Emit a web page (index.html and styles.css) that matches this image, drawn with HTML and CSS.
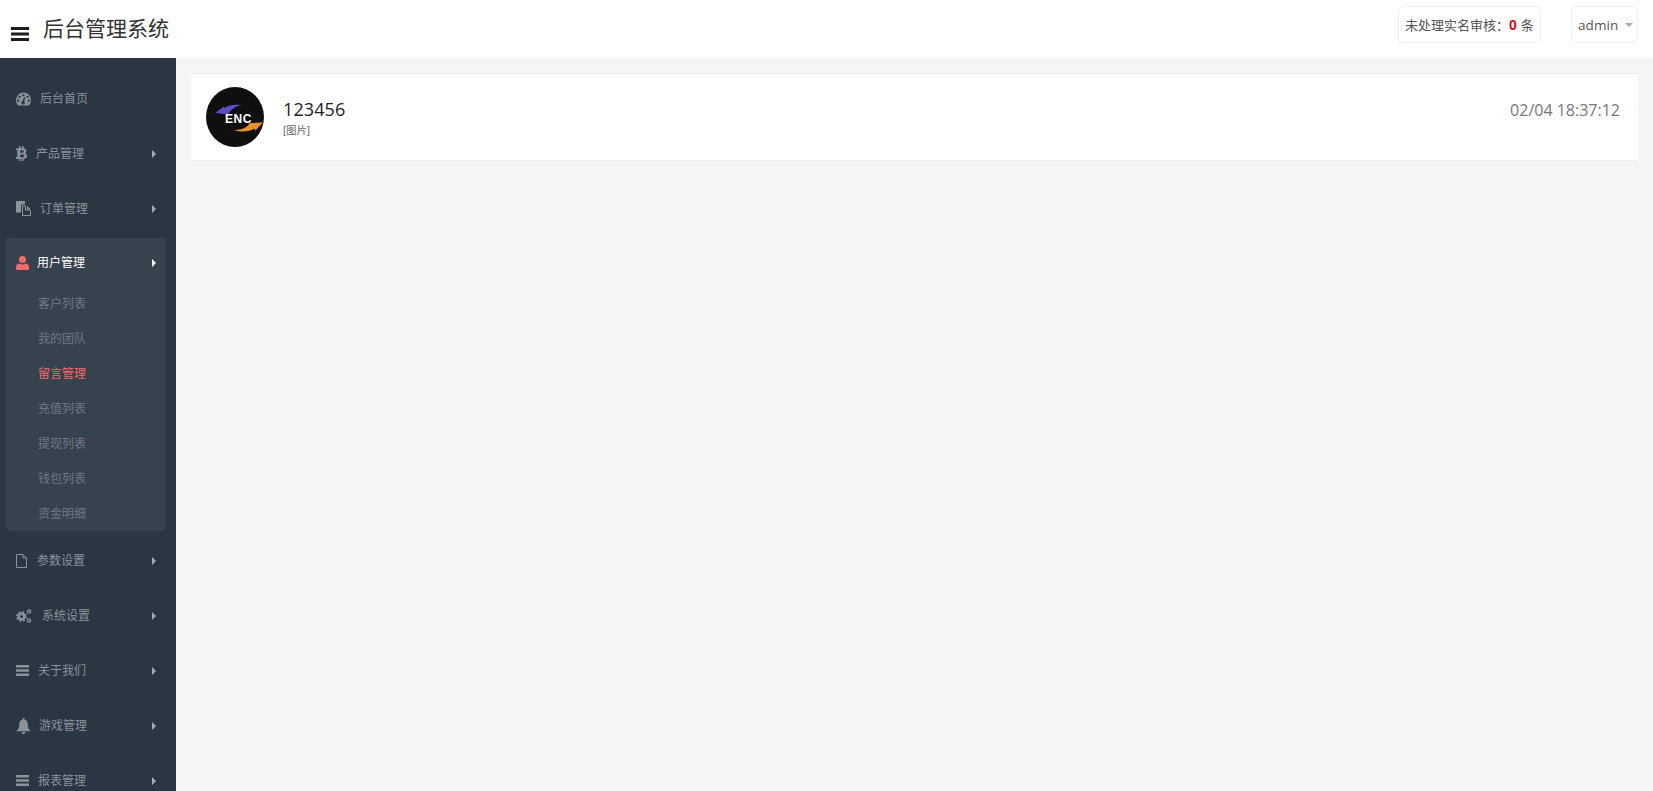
FILE: index.html
```html
<!DOCTYPE html>
<html lang="zh">
<head>
<meta charset="utf-8">
<title>后台管理系统</title>
<link rel="stylesheet" href="styles.css">
</head>
<body>
<header class="topbar">
  <div class="brand">
    <svg class="burger" viewBox="0 0 18 14"><path d="M0 0h18v3H0zM0 5.500h18v3H0zM0 11h18v3H0z"/></svg>
    <span class="brand-title">后台管理系统</span>
  </div>
  <div class="top-actions">
    <div class="pill pill-notice">未处理实名审核：<b class="count">0</b> 条</div>
    <div class="pill pill-user">admin<i class="caret"></i></div>
  </div>
</header>
<div class="layout">
  <nav class="sidebar">
    <a class="nav-item">
      <svg class="ico" viewBox="0 0 16 14"><path fill-rule="evenodd" d="M8 0a8 8 0 0 1 8 8c0 2-.6 3.800-1.700 5.300a1.500 1.500 0 0 1-1.200.7H2.900a1.500 1.500 0 0 1-1.200-.7A8.800 8.800 0 0 1 0 8a8 8 0 0 1 8-8zM8 1.700a1.200 1.200 0 1 0 0 2.400 1.200 1.200 0 0 0 0-2.400zM3.800 3.500a1.200 1.200 0 1 0 0 2.400 1.200 1.200 0 0 0 0-2.400zM12.200 3.500a1.200 1.200 0 1 0 0 2.400 1.200 1.200 0 0 0 0-2.400zM2.300 7.600a1.200 1.200 0 1 0 0 2.400 1.200 1.200 0 0 0 0-2.400zM13.700 7.600a1.200 1.200 0 1 0 0 2.400 1.200 1.200 0 0 0 0-2.400zM8.600 5 7 9.300a1.800 1.800 0 1 0 1.700.4L10 5.300z"/></svg>
      <span class="label gap-9">后台首页</span>
    </a>
    <a class="nav-item">
      <svg class="ico ico-narrow" viewBox="0 0 11 15"><path fill-rule="evenodd" d="M3 0h1.600v2.200H6V0h1.600v2.300C9.300 2.600 10.300 3.600 10.300 5.100c0 1-.5 1.800-1.400 2.100 1.300.3 2.100 1.300 2.100 2.700 0 2-1.300 2.900-3.400 3V15H6v-2.100H4.600V15H3v-2.100H0v-1.800h1.300V3.900H0V2.200h3zM4.200 4.200v2.500h2.100c.9 0 1.400-.4 1.400-1.300s-.5-1.200-1.400-1.200zM4.200 8.500v2.700h2.500c1 0 1.600-.5 1.600-1.400s-.6-1.300-1.600-1.300z"/></svg>
      <span class="label gap-9">产品管理</span><i class="arrow"></i>
    </a>
    <a class="nav-item">
      <svg class="ico ico-files" viewBox="0 0 15 15"><path fill-rule="evenodd" d="M0 0h9v3.500H6a1 1 0 0 0-1 1V11.500H0zM6 4.500h4V8.500h4L15 9.500V15H6zM7 5.500V14h7V9.500H9V5.500zM11 4.700l3.500 3.500H11z"/></svg>
      <span class="label gap-9">订单管理</span><i class="arrow"></i>
    </a>
    <div class="nav-group">
      <a class="nav-item nav-item-open">
        <svg class="ico ico-user" viewBox="0 0 13 14"><path d="M6.500 0a3.500 3.500 0 1 1 0 7 3.500 3.500 0 0 1 0-7zM3 7.500c1 .7 2.200 1 3.500 1s2.500-.3 3.500-1c2 .4 3 1.800 3 3.800v1.200c0 .9-.6 1.500-1.500 1.500h-10C.6 14 0 13.400 0 12.500v-1.200c0-2 1-3.400 3-3.800z"/></svg>
        <span class="label gap-8">用户管理</span><i class="arrow"></i>
      </a>
      <ul class="sub-list">
        <li class="sub-item">客户列表</li>
        <li class="sub-item">我的团队</li>
        <li class="sub-item sub-item-active">留言管理</li>
        <li class="sub-item">充值列表</li>
        <li class="sub-item">提现列表</li>
        <li class="sub-item">钱包列表</li>
        <li class="sub-item">资金明细</li>
      </ul>
    </div>
    <a class="nav-item">
      <svg class="ico ico-doc" viewBox="0 0 11 14"><path fill="none" stroke="currentColor" stroke-width="1" d="M.5.500h6.500l3.500 3.500v9.500H.5zM7 .500V4h3.500"/></svg>
      <span class="label gap-10">参数设置</span><i class="arrow"></i>
    </a>
    <a class="nav-item">
      <svg class="ico ico-cogs" viewBox="0 0 16 14"><g fill="none" stroke="currentColor"><circle cx="5.500" cy="7.500" r="2.800" stroke-width="2.600"/><circle cx="5.500" cy="7.500" r="4.700" stroke-width="1.500" stroke-dasharray="2 1.700"/><circle cx="13" cy="2.600" r="1.600" stroke-width="1.300"/><circle cx="13" cy="11.400" r="1.600" stroke-width="1.300"/></g></svg>
      <span class="label gap-10">系统设置</span><i class="arrow"></i>
    </a>
    <a class="nav-item">
      <svg class="ico ico-bars" viewBox="0 0 13 11"><path d="M0 0h13v2.400H0zM0 4.300h13v2.400H0zM0 8.600h13V11H0z"/></svg>
      <span class="label gap-9">关于我们</span><i class="arrow"></i>
    </a>
    <a class="nav-item">
      <svg class="ico ico-bell" viewBox="0 0 14 15"><path d="M7 0a1 1 0 0 1 1 1v.6c2 .4 3 2 3 4.400 0 3 .8 4.600 3 6.500H0c2.200-1.900 3-3.500 3-6.500 0-2.400 1-4 3-4.400V1a1 1 0 0 1 1-1zM5.200 13.200h3.600A1.900 1.900 0 0 1 7 15a1.900 1.900 0 0 1-1.800-1.800z"/></svg>
      <span class="label gap-8">游戏管理</span><i class="arrow"></i>
    </a>
    <a class="nav-item">
      <svg class="ico ico-bars" viewBox="0 0 13 11"><path d="M0 0h13v2.400H0zM0 4.300h13v2.400H0zM0 8.600h13V11H0z"/></svg>
      <span class="label gap-9">报表管理</span><i class="arrow"></i>
    </a>
  </nav>
  <main class="content">
    <article class="msg-card">
      <svg class="avatar" viewBox="0 0 58 60">
        <ellipse cx="29" cy="30" rx="29" ry="30" fill="#0f0f10"/>
        <path d="M9 26 18 19.500V21C23 18 29 17 35 18 29 19.500 25 22.500 22 27.500Z" fill="#5550c8"/>
        <path d="M57 35.500 49 44V41.500C43 45 35 45.500 28 43 36 43 41 40.500 44 36Z" fill="#e29329"/>
        <text class="avatar-text" x="32.500" y="36" text-anchor="middle">ENC</text>
      </svg>
      <div class="msg-body">
        <div class="msg-name">123456</div>
        <div class="msg-preview">[图片]</div>
      </div>
      <time class="msg-time">02/04 18:37:12</time>
    </article>
  </main>
</div>
</body>
</html>
```

FILE: styles.css
```css
* { box-sizing: border-box; }
html, body { margin: 0; height: 100%; overflow: hidden; }
body {
  font-family: "Liberation Sans", "Noto Sans CJK SC", sans-serif;
  font-size: 12px;
  background: #f5f5f5;
  color: #333;
  display: flex;
  flex-direction: column;
}
.topbar {
  height: 58px;
  flex: none;
  background: #fff;
  display: flex;
  justify-content: space-between;
  align-items: flex-start;
}
.brand { display: flex; align-items: center; padding: 15px 0 0 11px; }
.burger { width: 18px; height: 14px; margin-top: 10px; fill: #1d1d1f; }
.brand-title { margin-left: 14px; font-size: 21px; line-height: 28px; color: #333; }
.top-actions { display: flex; gap: 30px; padding: 6px 15px 0 0; }
.pill {
  height: 37px;
  border: 1px solid #f1f1f1;
  border-radius: 5px;
  display: flex;
  align-items: center;
  font-size: 13px;
  color: #555;
  background: #fff;
}
.pill-notice { padding: 0 6px; width: 143px; }
.pill-user { padding: 0 6px; width: 67px; font-family: "Open Sans", sans-serif; letter-spacing: 0.1px; font-size: 13.500px; }
.count { color: #e60012; margin: 0 4px 0 0; font-size: 14px; }
.caret {
  margin-left: 7px;
  border-top: 4px solid #aaa;
  border-left: 4px solid transparent;
  border-right: 4px solid transparent;
}
.layout { flex: 1; min-height: 0; display: flex; }
.sidebar {
  width: 176px;
  flex: none;
  background: #2b3643;
  padding-top: 13px;
  overflow: hidden;
}
.nav-item {
  display: flex;
  align-items: center;
  height: 55px;
  padding: 0 20px 0 16px;
  color: #8a929c;
  font-size: 12px;
}
.ico { width: 15px; height: 14px; fill: currentColor; flex: none; color: #8a929c; }
.ico-narrow { width: 11px; height: 15px; }
.ico-files { width: 15px; height: 15px; }
.ico-doc { width: 11px; height: 14px; }
.ico-cogs { width: 16px; height: 14px; }
.ico-bars { width: 13px; height: 11px; }
.ico-bell { width: 15px; height: 16px; }
.ico-user { width: 13px; height: 14px; color: #f96868; }
.label { flex: 1; line-height: 16px; }
.gap-8 { margin-left: 8px; }
.gap-9 { margin-left: 9px; }
.gap-10 { margin-left: 10px; }
.arrow {
  border-left: 4px solid #a5abb3;
  border-top: 4px solid transparent;
  border-bottom: 4px solid transparent;
}
.nav-group {
  margin: 2px 10px 2px 6px;
  background: #37424f;
  border-radius: 4px;
  height: 293px;
}
.nav-group .nav-item { padding: 0 10px 0 10px; height: 49px; color: #fff; }
.nav-item-open .arrow { border-left-color: #fff; }
.sub-list { list-style: none; margin: 0; padding: 0 0 0 32px; }
.sub-item { height: 35px; line-height: 35px; color: #6f7883; font-size: 12px; }
.sub-item-active { color: #f96868; }
.content { flex: 1; min-width: 0; padding: 15px 15px 0; }
.msg-card {
  height: 88px;
  background: #fff;
  border-top: 1px solid #e5e5e5;
  border-bottom: 1px solid #eee;
  display: flex;
  align-items: center;
  padding: 0 18px 0 15px;
}
.avatar { width: 58px; height: 60px; flex: none; }
.avatar-text { font-family: "Liberation Sans", sans-serif; font-weight: 700; font-size: 12px; letter-spacing: 0.5px; fill: #fff; }
.msg-body { flex: 1; margin-left: 19px; margin-top: -1px; }
.msg-name { font-size: 18px; line-height: 24px; color: #222; font-family: "Open Sans", sans-serif; letter-spacing: 0.1px; }
.msg-preview { font-size: 10.500px; line-height: 14px; margin-top: 2px; color: #666; }
.msg-time { font-size: 16px; color: #777; font-family: "Open Sans", sans-serif; align-self: flex-start; margin-top: 25px; }
```
